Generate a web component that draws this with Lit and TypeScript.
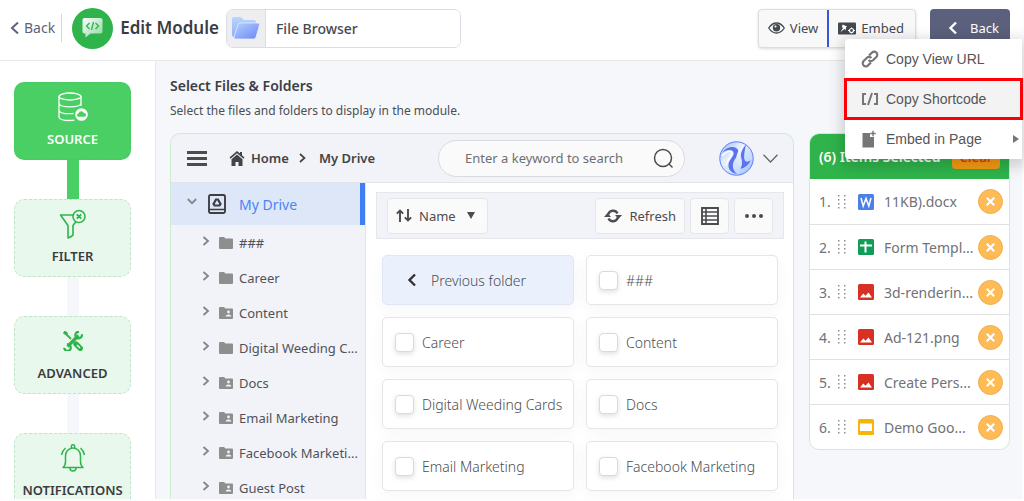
import { LitElement, html, css, svg, nothing } from "lit";
import { customElement, property } from "lit/decorators.js";

const chevronLeft = html`<svg width="10" height="14" viewBox="0 0 10 14" fill="none" stroke="currentColor" stroke-width="2.4"><path d="M8 1.5 2.5 7 8 12.5" /></svg>`;
const chevronRight = html`<svg width="8" height="10" viewBox="0 0 8 10" fill="none" stroke="currentColor" stroke-width="1.8"><path d="M1.5 1 6 5 1.5 9" /></svg>`;

const baseStyles = css`
  :host {
    font-family: "Noto Sans", "Open Sans", sans-serif;
    box-sizing: border-box;
  }
  *,
  *::before,
  *::after {
    box-sizing: border-box;
  }
  button,
  input {
    font: inherit;
    color: inherit;
    margin: 0;
  }
  button {
    cursor: pointer;
  }
  a {
    color: inherit;
    text-decoration: none;
  }
  ul {
    list-style: none;
    margin: 0;
    padding: 0;
  }
  svg {
    display: block;
    flex: none;
  }
`;

/* ---------- Top bar ---------- */

@customElement("module-header")
class ModuleHeader extends LitElement {
  static styles = [
    baseStyles,
    css`
      :host {
        display: block;
        position: relative;
        z-index: 2;
      }
      header {
        display: flex;
        align-items: center;
        height: 61px;
        padding: 0 12px 4px 10px;
        border-bottom: 1px solid #e6e7e9;
        background: #fff;
      }
      .back-link {
        display: flex;
        align-items: center;
        gap: 4px;
        font-size: 14px;
        line-height: 28px;
        color: #5d637e;
        padding-right: 6px;
        border-right: 1px solid #d4d6da;
      }
      .logo {
        margin-left: 10px;
      }
      h1 {
        margin: 0 7px;
        font-size: 17px;
        line-height: 24px;
        font-weight: 600;
        color: #3a3c44;
        white-space: nowrap;
      }
      .title-box {
        display: flex;
        width: 235px;
        height: 39px;
        border: 1px solid #dcdce4;
        border-radius: 7px;
        overflow: hidden;
        background: #fff;
      }
      .title-icon {
        display: flex;
        align-items: center;
        justify-content: center;
        width: 39px;
        background: #eeeef0;
        border-right: 1px solid #dcdce4;
      }
      .title-box input {
        flex: 1;
        min-width: 0;
        border: 0;
        padding: 0 10px;
        outline: none;
        font-size: 14px;
        font-weight: 500;
        color: #474950;
      }
      .actions {
        display: flex;
        margin-left: auto;
        height: 39px;
        border: 1px solid #dcdde0;
        border-radius: 4px;
        background: #f8f8f9;
        box-shadow: 0 1px 3px rgba(0, 0, 0, 0.15);
      }
      .actions button {
        display: flex;
        align-items: center;
        gap: 5px;
        padding: 0 9px;
        border: 0;
        background: none;
        font-size: 13px;
        color: #44484f;
      }
      .actions .embed {
        border-left: 2px solid #3b55d8;
        padding: 0 11px 0 9px;
      }
      .back-btn {
        display: flex;
        align-items: center;
        gap: 12px;
        width: 80px;
        height: 39px;
        margin-left: 14px;
        padding: 0 0 0 18px;
        border: 0;
        border-radius: 4px;
        background: #5b617d;
        color: #fff;
        font-size: 13px;
      }
      .menu {
        position: absolute;
        top: 39px;
        right: 0;
        width: 177px;
        background: #fff;
        border-radius: 4px 0 0 4px;
        box-shadow: 0 4px 14px 4px rgba(0, 0, 0, 0.16);
        font-family: "Liberation Sans", Arial, sans-serif;
      }
      .menu button {
        display: flex;
        align-items: center;
        gap: 7px;
        width: 100%;
        height: 40px;
        padding: 0 3px 1px 16px;
        border: 0;
        background: none;
        font-size: 14px;
        color: #555;
        text-align: left;
      }
      .menu svg {
        color: #767676;
      }
      .menu .current {
        background: #f3f3f4;
        outline: 3px solid #fb0007;
        outline-offset: -2px;
      }
      .menu .more {
        margin-left: auto;
      }
    `,
  ];

  render() {
    return html`
      <header>
        <a class="back-link" href="#">
          <svg width="10" height="14" viewBox="0 0 10 14" fill="none" stroke="currentColor" stroke-width="2"><path d="M8 1.5 2 7l6 5.5" /></svg>
          Back
        </a>
        <svg class="logo" width="41" height="41" viewBox="0 0 41 41">
          <defs>
            <linearGradient id="bubble" x1="0" y1="0" x2="1" y2="1">
              <stop offset="0" stop-color="#fff" />
              <stop offset="1" stop-color="#8dd6a0" />
            </linearGradient>
          </defs>
          <circle cx="20.500" cy="20.500" r="20.500" fill="#2fb44b" />
          <path d="M12.500 10h16q2 0 2 2v11.500q0 2-2 2H18.500L13.500 29.500v-4h-1q-2 0-2-2V12q0-2 2-2z" fill="url(#bubble)" />
          <path d="M17.500 15 14.500 18l3 3M23.500 15l3 3-3 3M21.500 14l-2 8" fill="none" stroke="#2fb44b" stroke-width="1.300" />
        </svg>
        <h1>Edit Module</h1>
        <div class="title-box">
          <span class="title-icon">
            <svg width="30" height="24" viewBox="0 0 30 24">
              <defs>
                <linearGradient id="backing" x1="0" y1="0" x2="0" y2="1">
                  <stop offset="0" stop-color="#b9d7fd" />
                  <stop offset="1" stop-color="#8faefb" />
                </linearGradient>
                <linearGradient id="flap" x1="0" y1="0" x2="1" y2="1">
                  <stop offset="0" stop-color="#b3d2fd" />
                  <stop offset="1" stop-color="#6d86f5" />
                </linearGradient>
              </defs>
              <path d="M1 3q0-2 2-2h6q1 0 2 1l2 2h10q2 0 2 2v3H8L3.500 21Q1 21 1 19z" fill="url(#backing)" />
              <path d="M9 7h18q2 0 1.500 2L25 21q-.5 2-2.500 2H4.500q-2 0-1.500-2L7 8.500Q7.500 7 9 7z" fill="url(#flap)" stroke="#eef3ff" stroke-width=".7" />
            </svg>
          </span>
          <input type="text" aria-label="Module title" .value=${"File Browser"} />
        </div>
        <div class="actions">
          <button type="button">
            <svg width="17" height="12" viewBox="0 0 17 12">
              <path d="M.7 6Q4 1 8.500 1t7.800 5Q13 11 8.500 11T.7 6z" fill="none" stroke="currentColor" stroke-width="1.300" />
              <circle cx="8.500" cy="5.800" r="3.700" fill="currentColor" />
              <circle cx="7.500" cy="4.500" r="1.100" fill="#f8f8f9" />
            </svg>
            View
          </button>
          <button type="button" class="embed" aria-haspopup="menu" aria-expanded="true">
            <svg width="18" height="13" viewBox="0 0 18 13">
              <rect y=".5" width="18" height="12" rx="1" fill="currentColor" />
              <path d="M4.500 2.500 9 4.500 8 5.500 7.800 8 6.500 7 2.500 10 5 6 4 5z" fill="#fff" />
              <circle cx="13.500" cy="8.500" r="2" fill="none" stroke="#fff" stroke-width="1.200" />
              <path d="M10 8.500h1.500M15.500 8.500H17M13.500 5.500v1M13.500 10.500v1" stroke="#fff" />
            </svg>
            Embed
          </button>
        </div>
        <button type="button" class="back-btn">${chevronLeft} Back</button>
      </header>
      <div class="menu" role="menu">
        <button type="button" role="menuitem">
          <svg width="18" height="18" viewBox="0 0 18 18" fill="none" stroke="currentColor" stroke-width="2.200">
            <path d="M8 5.500 11 2.600a3 3 0 0 1 4.400 4.300L12 10.300a3 3 0 0 1-4.400-.3" />
            <path d="M10 12.500 7 15.400a3 3 0 0 1-4.400-4.300L6 7.700a3 3 0 0 1 4.400.3" />
          </svg>
          Copy View URL
        </button>
        <button type="button" role="menuitem" class="current">
          <svg width="18" height="14" viewBox="0 0 18 14" fill="none" stroke="currentColor" stroke-width="2">
            <path d="M5 2H2v10h3M13 2h3v10h-3M11 1 7 13" />
          </svg>
          Copy Shortcode
        </button>
        <button type="button" role="menuitem">
          <svg width="18" height="18" viewBox="0 0 18 18">
            <path d="M1.500 3h7.500v4h4v10.500h-11.500z" fill="currentColor" />
            <path d="M12 .8v5.400M9.300 3.500h5.400" stroke="currentColor" stroke-width="1.400" />
          </svg>
          Embed in Page
          <svg class="more" width="6" height="8" viewBox="0 0 6 8"><path d="M0 0 6 4 0 8z" fill="currentColor" /></svg>
        </button>
      </div>
    `;
  }
}

/* ---------- Step list ---------- */

const stepIcons: Record<string, unknown> = {
  SOURCE: html`<svg width="30" height="30" viewBox="0 0 30 30" fill="none" stroke="#fff" stroke-width="1.300">
    <ellipse cx="12" cy="4.500" rx="11" ry="3.500" />
    <path d="M1 4.500v20.500c0 2.300 5 3.500 11 3.500q2.500 0 4.500-.3M23 4.500V14M1 11.300c0 2.300 5 3.500 11 3.500s11-1.200 11-3.500M1 18.200c0 2.300 5 3.500 11 3.500q2 0 3.500-.2" />
    <circle cx="23.500" cy="22.500" r="6.300" fill="#fff" stroke="none" />
    <path d="M20.300 24.800a1.800 1.800 0 0 1 .3-3.500 2.800 2.800 0 0 1 5.300-.4 2 2 0 0 1 .8 3.900z" fill="#49cf64" stroke="none" />
  </svg>`,
  FILTER: html`<svg width="27" height="30" viewBox="0 0 27 30" fill="none" stroke="#2fb44b" stroke-width="1.600">
    <path d="M14 6H1.500L9 16.500V29q4-1.500 5-3V16.500l3-4" stroke-linejoin="round" />
    <circle cx="20" cy="7.500" r="6" />
    <path d="m17.800 5.300 4.400 4.400M22.200 5.300l-4.400 4.400" stroke-width="1.900" />
  </svg>`,
  ADVANCED: html`<svg width="20" height="20" viewBox="0 0 20 20" fill="none" stroke="#2fb44b">
    <path d="M4.500 15.500 15.500 4.500" stroke-width="3.200" />
    <path d="M18.800 3.200a3.300 3.300 0 1 1-2.800-2.400M1.200 16.800a3.300 3.300 0 1 0 2.800-3.400" stroke-width="2.200" />
    <path d="M2 2 8 8" stroke-width="1.800" />
    <path d="m.8.8 3.400 2.400" stroke-width="3.200" />
    <path d="m13 13 4.300 4.300" stroke-width="5.400" stroke-linecap="round" />
    <path d="m14 14 3 3" stroke="#e9f8ec" stroke-width="1.500" />
  </svg>`,
  NOTIFICATIONS: html`<svg width="26" height="28" viewBox="0 0 26 28" fill="none" stroke="#2fb44b" stroke-width="1.500">
    <path d="M3 23.500q2.500-2 2.500-6V12a7.500 8 0 0 1 15 0v5.500q0 4 2.500 6z" stroke-linejoin="round" />
    <path d="M11.300 4V2.500a1.700 1.700 0 0 1 3.400 0V4M10 24a3 3 0 0 0 6 0M5.500 4Q2.500 6.500 1.500 11M20.500 4q3 2.500 4 7" />
  </svg>`,
};

@customElement("step-list")
class StepList extends LitElement {
  static styles = [
    baseStyles,
    css`
      :host {
        display: block;
        width: 156px;
        flex: none;
        padding: 21px 24px 0 14px;
        background: #fff;
        border-right: 1px solid #e9eaee;
        overflow: hidden;
      }
      li + li::before {
        content: "";
        display: block;
        width: 12px;
        height: 39px;
        margin: 0 auto;
        background: #f6f7fa;
      }
      li.first + li::before {
        background: #49cf64;
      }
      button {
        display: flex;
        flex-direction: column;
        align-items: center;
        width: 117px;
        height: 78px;
        padding: 8px 0 0;
        border: 1px dashed #bfe5c6;
        border-radius: 10px;
        background: #e9f8ec;
        color: #3a3c40;
        font-size: 13px;
        line-height: 18px;
        font-weight: 600;
      }
      .icon {
        display: flex;
        align-items: center;
        justify-content: center;
        height: 32px;
        margin-bottom: 7px;
      }
      .first button {
        background: #49cf64;
        border-color: #45c960;
        color: #fff;
      }
    `,
  ];

  render() {
    return html`<nav aria-label="Module steps">
      <ul>
        ${Object.keys(stepIcons).map(
          (name, i) => html`<li class=${i === 0 ? "first" : ""}>
            <button type="button"><span class="icon">${stepIcons[name]}</span>${name}</button>
          </li>`
        )}
      </ul>
    </nav>`;
  }
}

/* ---------- File browser ---------- */

interface Folder {
  name: string;
  label?: string;
  shared?: boolean;
}

const folders: Folder[] = [
  { name: "###" },
  { name: "Career" },
  { name: "Content", shared: true },
  { name: "Digital Weeding Cards", label: "Digital Weeding C..." },
  { name: "Docs", shared: true },
  { name: "Email Marketing", shared: true },
  { name: "Facebook Marketing", label: "Facebook Marketi...", shared: true },
  { name: "Guest Post", shared: true },
];

const folderIcon = (shared?: boolean) => html`<svg width="14" height="12" viewBox="0 0 14 12">
  <path d="M0 1q0-1 1-1h4l1.500 1.500H13q1 0 1 1V11q0 1-1 1H1q-1 0-1-1z" fill="#8e8e8e" />
  ${shared
    ? svg`<circle cx="9.500" cy="5" r="1.400" fill="#f2f3f9" /><path d="M6.800 9.500V8.800q1-1.300 2.700-1.300t2.700 1.300v.7z" fill="#f2f3f9" />`
    : nothing}
</svg>`;

@customElement("file-browser")
class FileBrowser extends LitElement {
  static styles = [
    baseStyles,
    css`
      :host {
        display: flex;
        flex-direction: column;
        flex: 1;
        min-width: 0;
        border: 1px solid #cdecd3;
        border-bottom: 0;
        border-radius: 10px 10px 0 0;
        overflow: hidden;
        background: #f2f3f9;
      }
      .bar {
        display: flex;
        align-items: center;
        height: 49px;
        flex: none;
        padding: 0 15px 0 16px;
        border-bottom: 1px solid #e3e4e9;
      }
      .plain {
        padding: 0;
        border: 0;
        background: none;
        color: #4c4c4c;
      }
      .crumbs {
        display: flex;
        align-items: center;
        margin-left: 22px;
        font-size: 13px;
        font-weight: 600;
        color: #444;
        white-space: nowrap;
      }
      .crumbs a {
        display: flex;
        align-items: center;
        gap: 6px;
      }
      .crumbs .sep {
        margin: 0 13px 0 10px;
      }
      .search {
        display: flex;
        align-items: center;
        width: 247px;
        height: 37px;
        margin-left: auto;
        padding: 0 10px 0 26px;
        border: 1px solid #d9dade;
        border-radius: 19px;
        background: #fafafa;
        color: #4c4c4c;
      }
      .search input {
        flex: 1;
        min-width: 0;
        padding: 0;
        border: 0;
        outline: none;
        background: none;
        font-size: 13px;
      }
      .search input::placeholder {
        color: #6e6e72;
        opacity: 1;
      }
      .avatar {
        margin: 0 9px 0 34px;
      }
      .body {
        display: flex;
        flex: 1;
        min-height: 0;
      }
      .tree {
        width: 195px;
        flex: none;
        border-right: 1px solid #e3e4e9;
        overflow: hidden;
      }
      .tree button {
        display: flex;
        align-items: center;
        width: 100%;
        height: 35px;
        padding: 0 0 0 31px;
        border: 0;
        background: none;
        color: #505258;
        font-size: 13px;
        white-space: nowrap;
      }
      .tree .chev {
        color: #858585;
        margin-right: 9px;
        padding-bottom: 4px;
      }
      .tree .folder {
        margin-right: 6px;
      }
      .tree button.root {
        height: 42px;
        padding-left: 16px;
        background: #dde7f8;
        border-right: 5px solid #3d7ff5;
        color: #4a84f5;
        font-size: 14px;
      }
      .tree .root .chev {
        margin-right: 11px;
        padding-bottom: 6px;
      }
      .root .drive {
        margin-right: 13px;
      }
      .files {
        flex: 1;
        min-width: 0;
        padding: 9px 9px 0 10px;
        background: #fff;
      }
      .tools {
        display: flex;
        align-items: center;
        gap: 5px;
        height: 47px;
        padding: 0 10px;
        border: 1px solid #e6e7eb;
        background: #f2f3f9;
      }
      .tools button {
        display: flex;
        align-items: center;
        justify-content: center;
        gap: 7px;
        height: 36px;
        min-width: 39px;
        padding: 0 8px;
        border: 1px solid #e5e6ea;
        border-radius: 4px;
        background: #fafafa;
        color: #4c4c50;
        font-size: 13px;
      }
      .tools .sort {
        margin-right: auto;
      }
      .tools .sort .caret {
        margin: 0 4px;
      }
      .grid {
        display: grid;
        grid-template-columns: repeat(2, minmax(0, 1fr));
        gap: 12px;
        padding: 16px 6px 0;
      }
      .tile {
        display: flex;
        align-items: center;
        gap: 8px;
        height: 50px;
        padding: 0 12px;
        border: 1px solid #e4e5e8;
        border-radius: 5px;
        background: #fff;
        box-shadow: 0 4px 16px rgba(0, 0, 0, 0.04);
        color: #4c4e54;
        font-size: 14px;
        font-weight: 300;
        white-space: nowrap;
      }
      .up {
        gap: 14px;
        padding-left: 24px;
        background: #eaf1fd;
        border-color: #e0e6f0;
      }
      .up svg {
        color: #333;
      }
      .tile input {
        appearance: none;
        flex: none;
        width: 19px;
        height: 19px;
        border: 1px solid #d9dadd;
        border-radius: 4px;
        background: #fff;
        box-shadow: 0 2px 5px rgba(0, 0, 0, 0.12);
      }
    `,
  ];

  render() {
    return html`
      <div class="bar">
        <button type="button" class="plain" aria-label="Menu">
          <svg width="20" height="15" viewBox="0 0 20 15" fill="#4c4c4c"><path d="M0 0h20v3H0zM0 6h20v3H0zM0 12h20v3H0z" /></svg>
        </button>
        <nav class="crumbs" aria-label="Breadcrumb">
          <a href="#">
            <svg width="16" height="15" viewBox="0 0 16 15">
              <path d="M8 0 .5 6.500l1 1.200L8 2.200l6.500 5.500 1-1.200-2.500-2.200V1h-2v1.600z" fill="#444" />
              <path d="M8 3.500 2.500 8.200V15h4v-4h3v4h4V8.200z" fill="#444" />
            </svg>
            Home
          </a>
          <svg class="sep" width="7" height="10" viewBox="0 0 7 10" fill="none" stroke="currentColor" stroke-width="1.700"><path d="M1 1l4.500 4L1 9" /></svg>
          <a href="#">My Drive</a>
        </nav>
        <label class="search">
          <input type="search" aria-label="Search" placeholder="Enter a keyword to search" />
          <svg width="21" height="21" viewBox="0 0 21 21" fill="none" stroke="currentColor" stroke-width="1.500"><circle cx="10" cy="10" r="8.500" /><path d="m15.500 15.500 4 4" /></svg>
        </label>
        <svg class="avatar" width="35" height="35" viewBox="0 0 35 35">
          <defs>
            <linearGradient id="orb" x1="0" y1="0" x2="1" y2="1">
              <stop offset="0" stop-color="#8fb0fb" />
              <stop offset=".35" stop-color="#e4effe" />
              <stop offset=".7" stop-color="#c6dcfb" />
              <stop offset="1" stop-color="#8fb2fb" />
            </linearGradient>
            <linearGradient id="ribbon" x1="0" y1="0" x2="0" y2="1">
              <stop offset="0" stop-color="#fff" />
              <stop offset="1" stop-color="#c3d8fc" />
            </linearGradient>
          </defs>
          <circle cx="17.500" cy="17.500" r="16.700" fill="url(#orb)" stroke="#5c7df3" />
          <path d="M3 12C7 5 17 4 19 9c1.500 4-2 7-4 11s-1.500 9 3 13c-6-1-9-5-8.500-9.500.5-5 6-8.500 5-12C13.500 8 7 8.500 3 12z" fill="#5b74ee" />
          <path d="M27 3.500c-4 5-6 9-4.500 14 1 4 1 7-1.500 10.500 5-1 8.500-4 11-9-3 2.500-6 2-6.500-.5-1-4 .5-10 1.500-15z" fill="#5b74ee" />
          <path d="M26 3c-5 4-8 8-8.500 13-.4 4-2 8-1 12 .5 2 2 4 3.500 4.500 1.500-5 3-8 1.500-14C20.500 13 23 7 26 3z" fill="url(#ribbon)" />
          <path d="M3 15c4-5 9-6 10-3 .5 3-5 6-6 13" fill="none" stroke="#fff" stroke-width="1.500" />
        </svg>
        <button type="button" class="plain" aria-label="Account menu">
          <svg width="15" height="9" viewBox="0 0 15 9" fill="none" stroke="#666" stroke-width="1.300"><path d="M.5.700 7.500 8 14.500.700" /></svg>
        </button>
      </div>
      <div class="body">
        <div class="tree">
          <button type="button" class="root">
            <span class="chev"><svg width="10" height="7" viewBox="0 0 10 7" fill="none" stroke="currentColor" stroke-width="1.800"><path d="M.8 1 5 5.200 9.200 1" /></svg></span>
            <svg class="drive" width="18" height="20" viewBox="0 0 18 20" fill="none" stroke="#3f3f42">
              <rect x="1" y="1" width="16" height="18" rx="1.500" stroke-width="1.900" />
              <path d="M1 15.500h16" stroke-width="1.500" />
              <path d="M8 5.500h2l2.500 4.500-1 1.500h-5l-1-1.500z" stroke-width="2.200" />
            </svg>
            My Drive
          </button>
          ${folders.map(
            (f) => html`<button type="button">
              <span class="chev">${chevronRight}</span><span class="folder">${folderIcon(f.shared)}</span>${f.label ?? f.name}
            </button>`
          )}
        </div>
        <div class="files">
          <div class="tools">
            <button type="button" class="sort">
              <svg width="16" height="13" viewBox="0 0 16 13" fill="none" stroke="currentColor" stroke-width="1.900"><path d="M4 13V1.500M.8 4.700 4 1.500l3.200 3.200M12 0v11.500M8.800 8.300l3.200 3.200 3.200-3.200" /></svg>
              Name
              <svg class="caret" width="8" height="7" viewBox="0 0 8 7"><path d="M0 0h8L4 7z" fill="currentColor" /></svg>
            </button>
            <button type="button">
              <svg width="18" height="14" viewBox="0 0 18 14">
                <path d="M4.200 5.500A5 5 0 0 1 13.500 4.500M13.800 8.500A5 5 0 0 1 4.500 9.500" fill="none" stroke="currentColor" stroke-width="2.400" />
                <path d="M0 8h7L3.500 4zM18 6h-7l3.500 4z" fill="currentColor" />
              </svg>
              Refresh
            </button>
            <button type="button" aria-label="List view">
              <svg width="18" height="18" viewBox="0 0 18 18" fill="none" stroke="currentColor"><path d="M1 1h16v16H1z" stroke-width="1.900" /><path d="M1 5h16M1 9h16M1 13h16M5 1v16" stroke-width="1.600" /></svg>
            </button>
            <button type="button" aria-label="More">
              <svg width="18" height="4" viewBox="0 0 18 4" fill="currentColor"><circle cx="2" cy="2" r="2" /><circle cx="9" cy="2" r="2" /><circle cx="16" cy="2" r="2" /></svg>
            </button>
          </div>
          <div class="grid">
            <button type="button" class="tile up">${chevronLeft} Previous folder</button>
            ${folders.slice(0, 7).map((f) => html`<label class="tile"><input type="checkbox" />${f.name}</label>`)}
          </div>
        </div>
      </div>
    `;
  }
}

/* ---------- Selected items ---------- */

const typeIcon = (type: string) => {
  switch (type) {
    case "doc":
      return html`<svg width="16" height="16" viewBox="0 0 16 16"><rect width="16" height="16" rx="1.500" fill="#4a80e8" /><path d="m3 4 2.200 8L8 4.500 10.800 12 13 4" fill="none" stroke="#fff" stroke-width="1.500" /></svg>`;
    case "sheet":
      return html`<svg width="16" height="16" viewBox="0 0 16 16"><rect width="16" height="16" rx="1.500" fill="#109d58" /><path d="M2 6.500h12M7.500 2.500v11" stroke="#fff" stroke-width="2" /></svg>`;
    case "slides":
      return html`<svg width="16" height="16" viewBox="0 0 16 16"><rect width="16" height="16" rx="1.500" fill="#f5b609" /><path d="M2 4.500h12v7.500H2z" fill="#fff" /></svg>`;
    default:
      return html`<svg width="16" height="16" viewBox="0 0 16 16"><rect width="16" height="16" rx="1.500" fill="#d93025" /><path d="m2 13.500 3.300-4 2.200 2.300 3-3.300 3.500 5z" fill="#fff" /></svg>`;
  }
};

@customElement("selected-items")
class SelectedItems extends LitElement {
  @property({ attribute: false }) items: { name: string; type: string }[] = [];

  static styles = [
    baseStyles,
    css`
      :host {
        display: block;
        width: 201px;
        flex: none;
        align-self: flex-start;
        border: 1px solid #cdecd3;
        border-radius: 10px;
        overflow: hidden;
        background: #fff;
      }
      .head {
        display: flex;
        align-items: center;
        justify-content: space-between;
        height: 45px;
        padding: 0 9px;
        background: #2fb44b;
        color: #fff;
        font-size: 14px;
        font-weight: 600;
        white-space: nowrap;
      }
      .head button {
        width: 48px;
        height: 24px;
        padding: 0;
        border: 0;
        border-radius: 4px;
        background: #f59a14;
        color: #d8410b;
        font-size: 13px;
        line-height: 24px;
      }
      li {
        display: flex;
        align-items: center;
        height: 45px;
        padding: 0 6px 0 9px;
        color: #707277;
        font-size: 14px;
        white-space: nowrap;
      }
      li + li {
        border-top: 1px solid #e0e0e2;
      }
      .num {
        width: 19px;
      }
      .name {
        flex: 1;
        min-width: 0;
        margin-left: 10px;
      }
      .grip {
        margin-right: 11px;
      }
      .remove {
        display: flex;
        align-items: center;
        justify-content: center;
        width: 25px;
        height: 25px;
        padding: 0;
        border: 1px solid #f0ae4b;
        border-radius: 50%;
        background: #ffbb55;
      }
    `,
  ];

  render() {
    return html`
      <div class="head"><span>(${this.items.length}) Items Selected</span><button type="button">Clear</button></div>
      <ul>
        ${this.items.map(
          (item, i) => html`<li>
            <span class="num">${i + 1}.</span>
            <svg class="grip" width="9" height="14" viewBox="0 0 9 14" fill="#909090">
              ${[0, 4, 8, 12].map(
                (y) => svg`<rect x="0" y=${y} width="1.500" height="1.500" /><rect x="6" y=${y} width="1.500" height="1.500" />`
              )}
            </svg>
            ${typeIcon(item.type)}
            <span class="name">${item.name}</span>
            <button type="button" class="remove" aria-label="Remove">
              <svg width="9" height="9" viewBox="0 0 9 9" stroke="#fff" stroke-width="2.200"><path d="m.8.8 7.400 7.400M8.200.8.8 8.200" /></svg>
            </button>
          </li>`
        )}
      </ul>
    `;
  }
}

/* ---------- Page ---------- */

@customElement("app-root")
class AppRoot extends LitElement {
  static styles = [
    baseStyles,
    css`
      :host {
        display: flex;
        flex-direction: column;
        height: 100vh;
        padding: 0 2px 2px 0;
        overflow: hidden;
        background: #fdfdfd;
      }
      .columns {
        display: flex;
        flex: 1;
        min-height: 0;
      }
      main {
        display: flex;
        flex-direction: column;
        flex: 1;
        min-width: 0;
        padding: 13px 12px 0 14px;
        background: #f6f7fa;
      }
      h2 {
        margin: 0 0 3px;
        font-size: 14px;
        line-height: 24px;
        font-weight: 600;
        color: #3c3e45;
      }
      p {
        margin: 0 0 12px;
        font-size: 12px;
        line-height: 20px;
        color: #4b4d54;
      }
      .panels {
        display: flex;
        gap: 15px;
        flex: 1;
        min-height: 0;
      }
    `,
  ];

  private items = [
    { name: "11KB).docx", type: "doc" },
    { name: "Form Templ...", type: "sheet" },
    { name: "3d-renderin...", type: "image" },
    { name: "Ad-121.png", type: "image" },
    { name: "Create Pers...", type: "image" },
    { name: "Demo Goo...", type: "slides" },
  ];

  render() {
    return html`
      <module-header></module-header>
      <div class="columns">
        <step-list></step-list>
        <main>
          <h2>Select Files &amp; Folders</h2>
          <p>Select the files and folders to display in the module.</p>
          <div class="panels">
            <file-browser></file-browser>
            <selected-items .items=${this.items}></selected-items>
          </div>
        </main>
      </div>
    `;
  }
}
